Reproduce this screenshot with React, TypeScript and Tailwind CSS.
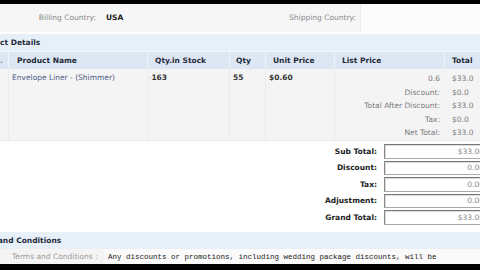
import React from "react";

const cols = "grid grid-cols-[11px_139px_82px_36px_69px_110px_60px]";

const summary = [
  { label: "", value: "$33.0", first: "0.6" },
  { label: "Discount:", value: "$0.0" },
  { label: "Total After Discount:", value: "$33.0" },
  { label: "Tax:", value: "$0.0" },
  { label: "Net Total:", value: "$33.0" },
];

const totals = [
  { label: "Sub Total:", value: "$33.00" },
  { label: "Discount:", value: "0.00" },
  { label: "Tax:", value: "0.00" },
  { label: "Adjustment:", value: "0.00" },
  { label: "Grand Total:", value: "$33.00" },
];

export default function App() {
  return (
    <div className="w-[480px] h-[270px] overflow-hidden bg-white text-[7.5px] leading-none whitespace-nowrap font-['DejaVu_Sans',Verdana,sans-serif]">
      <div className="w-[510px] -ml-[2px]">
        <div className="h-[4px] bg-black" />

        {/* address row */}
        <div className="flex h-[28px] items-center bg-[#f6f6f6]">
          <div className="w-[108px] pr-[10px] text-right text-[#8a8a8a]">Billing Country:</div>
          <div className="w-[182px] font-bold text-[#222]">USA</div>
          <div className="w-[72px] text-right pr-[4px] text-[#8a8a8a]">Shipping Country:</div>
          <div className="flex-1 h-full bg-[#fbfbfb] border-l border-[#ececec]" />
        </div>

        <div className="h-[2px] bg-white" />
        <div className="flex h-[17px] items-center bg-[#e7eff9] font-bold text-[#1f2a3a] -ml-[25px] pl-[2px]">
          Product Details
        </div>

        {/* column header */}
        <div className={`${cols} h-[18px] bg-[#dde7f3] font-bold text-[#1f2a3a] border-t border-[#f0f5fb]`}>
          <div className="flex items-center pl-[2px] border-r border-[#eef3fa] text-[#889]">.</div>
          <div className="flex items-center pl-[8px] border-r border-[#eef3fa]">Product Name</div>
          <div className="flex items-center pl-[7px] border-r border-[#eef3fa]">Qty.in Stock</div>
          <div className="flex items-center pl-[6px] border-r border-[#eef3fa]">Qty</div>
          <div className="flex items-center pl-[7px] border-r border-[#eef3fa]">Unit Price</div>
          <div className="flex items-center pl-[7px] border-r border-[#eef3fa]">List Price</div>
          <div className="flex items-center pl-[7px]">Total</div>
        </div>

        {/* product row */}
        <div className={`${cols} h-[72px] bg-[#f4f4f4] border-b border-[#e8e8e8]`}>
          <div className="border-r border-[#ebebeb]" />
          <div className="pt-[5px] pl-[3px] text-[#4b5b86] border-r border-[#ebebeb]">Envelope Liner - (Shimmer)</div>
          <div className="pt-[5px] pl-[1px] font-bold text-[#333] border-r border-[#ebebeb]">
            <span className="text-[#aaa] font-normal">·</span>163
          </div>
          <div className="pt-[5px] pl-[3px] font-bold text-[#333] border-r border-[#ebebeb]">55</div>
          <div className="pt-[5px] pl-[3px] font-bold text-[#333] border-r border-[#ebebeb]">$0.60</div>
          <div className="col-span-2 pt-[6px] flex flex-col gap-[5.5px] text-[#7a7a7a]">
            {summary.map((s, i) => (
              <div key={i} className="flex h-[8px]">
                <div className="w-[109px] text-right pr-[4px]">{s.first ?? s.label}</div>
                <div className="pl-[8px]">{s.value}</div>
              </div>
            ))}
          </div>
        </div>

        {/* totals */}
        <div className="flex flex-col gap-[2px] pt-[3px] h-[91px] bg-white">
          {totals.map((t) => (
            <div key={t.label} className="flex items-center h-[14.5px]">
              <div className="w-[386px] pr-[7px] text-right font-bold text-[#222]">{t.label}</div>
              <div className="w-[118px] h-full flex items-center justify-end pr-[17px] text-[#888] bg-white border border-[#aaa] border-t-[#777] border-l-[#888] shadow-[inset_1px_1px_0_#ddd]">
                {t.value}
              </div>
            </div>
          ))}
        </div>

        {/* terms */}
        <div className="flex h-[17px] items-center bg-[#e7eff9] font-bold text-[#1f2a3a] -ml-[28px]">
          Terms and Conditions
        </div>
        <div className="flex h-[15px] items-center bg-[#f4f4f4]">
          <div className="w-[106px] pl-[14px] text-[#9a9a9a] self-stretch flex items-center">Terms and Conditions :</div>
          <div className="flex-1 h-full bg-[#fafafa] pl-[4px] pt-[5px] text-[7.5px] text-[#222] font-['Liberation_Mono',monospace]">
            Any discounts or promotions, including wedding package discounts, will be
          </div>
        </div>
        <div className="h-[10px] bg-black" />
      </div>
    </div>
  );
}
